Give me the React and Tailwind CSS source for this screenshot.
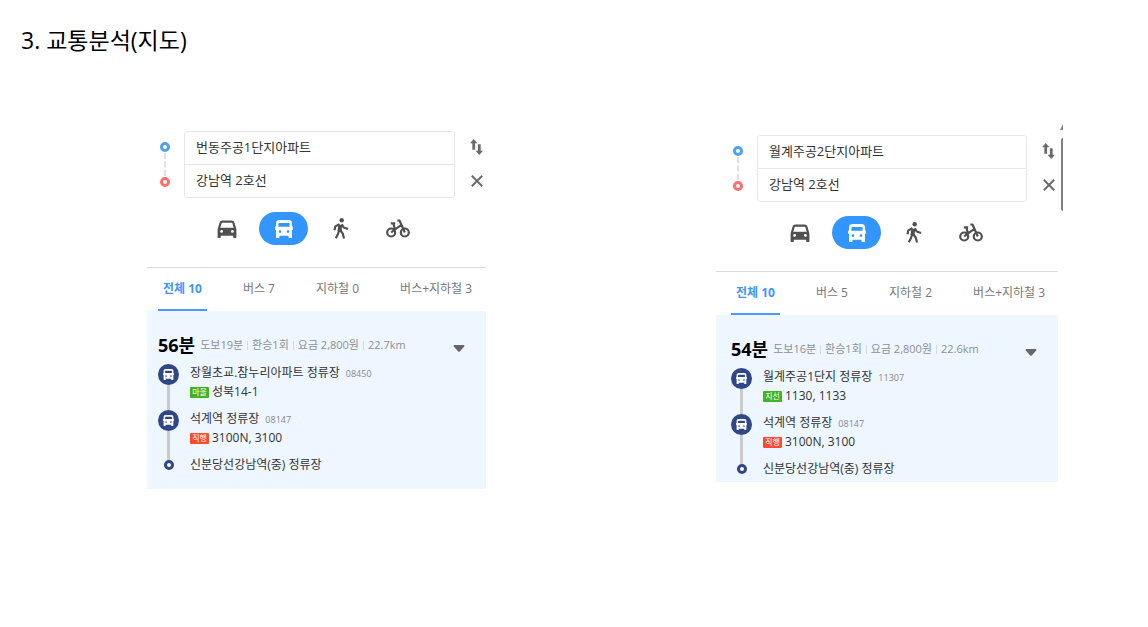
import React from 'react';

const CarIcon = () => (
  <svg viewBox="0 0 20 18" className="h-[18px] w-5" fill="#505050" aria-hidden="true">
    <path
      fillRule="evenodd"
      d="M5.500.5h9c1.700 0 2.500.7 3 2.200L19 8c.3.700.4 1.100.4 1.700V17c0 .6-.4 1-1 1h-1.200c-.6 0-1-.4-1-1v-1.300H3.800V17c0 .6-.4 1-1 1H1.600c-.6 0-1-.4-1-1V9.700C.6 9.100.7 8.700 1 8l1.500-5.300C3 1.200 3.800.5 5.500.5Zm.3 2.200c-.8 0-1.200.3-1.400 1L3.300 7.700h13.400l-1.100-4c-.2-.7-.6-1-1.400-1H5.800ZM4.600 10a1.400 1.400 0 1 0 0 2.800 1.400 1.400 0 0 0 0-2.800Zm10.800 0a1.400 1.400 0 1 0 0 2.800 1.400 1.400 0 0 0 0-2.800Z"
    />
  </svg>
);

const BusIcon = ({ className }) => (
  <svg viewBox="0 0 18 18" className={className} fill="#fff" aria-hidden="true">
    <path
      fillRule="evenodd"
      d="M4.500 0h9C16 0 17 1.200 17 3.500V6.500h.8v3.500H17v7c0 .6-.4 1-1 1h-1.500c-.6 0-1-.4-1-1v-1.200h-9V17c0 .6-.4 1-1 1H2c-.6 0-1-.4-1-1v-7H.2V6.500H1V3.500C1 1.200 2 0 4.500 0Zm-.3 2.900c-.5 0-.8.3-.8.800v3h11.200v-3c0-.5-.3-.8-.8-.8H4.200ZM5 10.300a1.300 1.300 0 1 0 0 2.600 1.300 1.300 0 0 0 0-2.600Zm8 0a1.300 1.300 0 1 0 0 2.600 1.300 1.300 0 0 0 0-2.600Z"
    />
  </svg>
);

const WalkIcon = () => (
  <svg viewBox="0 0 16 21" className="h-[21px] w-4" fill="none" stroke="#505050" aria-hidden="true">
    <circle cx="8.700" cy="2.300" r="2.200" fill="#505050" stroke="none" />
    <path d="M7.300 6.800 6.500 13.200" strokeWidth="4" />
    <path d="M6.500 6.200 2.300 8.400 1.500 12.300M8.800 6.300l1.900 3.200 4.400 1.500M6 12.500 5 16l-2.200 4.300M7.500 12.500l2.300 3.200 1.200 4.700" strokeWidth="2.200" strokeLinejoin="round" />
  </svg>
);

const BikeIcon = () => (
  <svg viewBox="0 0 24 19" className="h-[19px] w-6" fill="none" stroke="#505050" strokeWidth="2.200" aria-hidden="true">
    <circle cx="5.200" cy="13.500" r="4" />
    <circle cx="18.800" cy="13.500" r="4" />
    <path
      d="M4.800 4.300h4.400M7.400 4.300l1.400 5.900M5.200 13.500 9 10.300l5.800-4M11.300 1.500h2.200l5.300 12"
      strokeLinejoin="round"
    />
  </svg>
);

const SwapIcon = () => (
  <svg viewBox="0 0 14 18" className="h-[18px] w-3.5" fill="#6b6b6b" aria-hidden="true">
    <path d="M4 .5 8 5H5.500v7h-3V5H0ZM8.500 6h3v7H14l-4 4.500L6 13h2.500Z" />
  </svg>
);

const CloseIcon = () => (
  <svg viewBox="0 0 12 12" className="h-3 w-3" stroke="#6b6b6b" strokeWidth="2" aria-hidden="true">
    <path d="m.8.8 10.400 10.400M11.200.8.8 11.200" />
  </svg>
);

const modes = [
  { label: '자동차', icon: <CarIcon /> },
  { label: '대중교통', icon: <BusIcon className="h-[18px] w-[18px]" />, active: true },
  { label: '도보', icon: <WalkIcon /> },
  { label: '자전거', icon: <BikeIcon /> },
];

const routes = [
  {
    id: 'left',
    from: '번동주공1단지아파트',
    tabs: ['전체 10', '버스 7', '지하철 0', '버스+지하철 3'],
    time: '56분',
    facts: ['도보19분', '환승1회', '요금 2,800원', '22.7km'],
    stops: [
      { name: '장월초교.참누리아파트 정류장', code: '08450', kind: '마을', color: 'bg-[#43b31f]', lines: '성북14-1' },
      { name: '석계역 정류장', code: '08147', kind: '직행', color: 'bg-[#ff4a2e]', lines: '3100N, 3100' },
    ],
    inset: 'pl-[11px]',
    bottom: 'pb-[15px]',
  },
  {
    id: 'right',
    from: '월계주공2단지아파트',
    tabs: ['전체 10', '버스 5', '지하철 2', '버스+지하철 3'],
    time: '54분',
    facts: ['도보16분', '환승1회', '요금 2,800원', '22.6km'],
    stops: [
      { name: '월계주공1단지 정류장', code: '11307', kind: '지선', color: 'bg-[#43b31f]', lines: '1130, 1133' },
      { name: '석계역 정류장', code: '08147', kind: '직행', color: 'bg-[#ff4a2e]', lines: '3100N, 3100' },
    ],
    inset: 'pl-[15px]',
    bottom: 'pb-[4px]',
  },
];

function RoutePanel({ route }) {
  const field = 'block h-8 w-full bg-transparent px-[11px] pb-[3px] text-[13px] text-[#333] outline-none';
  return (
    <section className="min-w-0 flex-1">
      <form className={`flex ${route.inset} pr-[3px]`}>
        <div className="flex w-[14px] flex-col items-center py-[11px]" aria-hidden="true">
          <span className="h-[10px] w-[10px] rounded-full border-[3px] border-[#4f9ef8]" />
          <span className="my-px w-0 flex-1 border-l-2 border-dashed border-[#e0e0e0]" />
          <span className="h-[10px] w-[10px] rounded-full border-[3px] border-[#fb706b]" />
        </div>
        <div className="ml-3 min-w-0 flex-1 rounded-[3px] border border-[#e8e8e8]">
          <input className={field} aria-label="출발지" defaultValue={route.from} />
          <div className="border-t border-[#e8e8e8]">
            <input className={field} aria-label="도착지" defaultValue="강남역 2호선" />
          </div>
        </div>
        <div className="ml-[15px] flex w-[13px] flex-col">
          <button type="button" aria-label="출발지와 도착지 바꾸기" className="flex h-8 items-center justify-center">
            <SwapIcon />
          </button>
          <button type="button" aria-label="닫기" className="flex h-[35px] items-center justify-center">
            <CloseIcon />
          </button>
        </div>
      </form>

      <div className={route.inset}>
        <div className="mt-[14px] flex gap-2 pl-11">
          {modes.map((m) => (
            <button
              key={m.label}
              type="button"
              aria-label={m.label}
              className={`flex h-[33px] w-[49px] items-center justify-center rounded-full ${m.active ? 'bg-[#3396ff]' : ''}`}
            >
              {m.icon}
            </button>
          ))}
        </div>
      </div>

      <div role="tablist" className={`mt-[22px] flex h-11 gap-[31px] border-t border-[#dcdcdc] ${route.inset}`}>
        {route.tabs.map((t, i) => (
          <button
            key={t}
            type="button"
            role="tab"
            aria-selected={i === 0}
            className={`border-b-2 px-[5px] text-[12px] whitespace-nowrap ${
              i === 0 ? 'border-[#4b9bfa] font-bold text-[#3f94f8]' : 'border-transparent text-[#777]'
            }`}
          >
            {t}
          </button>
        ))}
      </div>

      <div className={`bg-[#eef6ff] pt-5 ${route.inset} ${route.bottom}`}>
        <div className="mb-[5px] flex h-7 items-center pr-[21px]">
          <h2 className="text-[18px] font-bold text-black">{route.time}</h2>
          <ul className="ml-[5px] flex items-center text-[11px] whitespace-nowrap text-[#8d9194]">
            {route.facts.map((f, i) => (
              <li key={f} className="flex items-center">
                {i > 0 && <span className="mx-1 h-[9px] w-px bg-[#d5dbe1]" />}
                {f}
              </li>
            ))}
          </ul>
          <button type="button" aria-label="상세 경로 펼치기" className="mt-1.5 ml-auto">
            <svg viewBox="0 0 12 7" className="h-[7px] w-3" fill="#666" aria-hidden="true">
              <path d="M1.500 0h9c1 0 1.300.9.700 1.600L7 6.300c-.6.700-1.400.7-2 0L.8 1.600C.2.900.5 0 1.500 0Z" />
            </svg>
          </button>
        </div>
        <ol className="text-[12px] leading-[18px] whitespace-nowrap text-[#333]">
          {route.stops.map((s) => (
            <li key={s.name} className="flex h-[46px] gap-[11px]">
              <div className="flex w-[21px] flex-col items-center">
                <span className="flex h-[21px] w-[21px] shrink-0 items-center justify-center rounded-full bg-[#2f4687]">
                  <BusIcon className="h-[11px] w-[11px]" />
                </span>
                <span className="w-[3px] flex-1 bg-[#c8cacc]" />
              </div>
              <div>
                <p>
                  {s.name}
                  <span className="ml-1.5 text-[9px] text-[#85898c]">{s.code}</span>
                </p>
                <p className="flex items-center gap-[3px]">
                  <span className={`flex h-[11px] w-[19px] items-center justify-center rounded-[1px] text-[8px] text-white ${s.color}`}>
                    {s.kind}
                  </span>
                  {s.lines}
                </p>
              </div>
            </li>
          ))}
          <li className="flex h-[18px] gap-[11px]">
            <div className="flex w-[21px] flex-col items-center">
              <span className="h-1 w-[3px] bg-[#c8cacc]" />
              <span className="h-[10px] w-[10px] rounded-full border-[3px] border-[#2f4687] bg-white" />
            </div>
            <p>신분당선강남역(중) 정류장</p>
          </li>
        </ol>
      </div>
    </section>
  );
}

export default function App() {
  return (
    <main className="min-h-screen bg-white pt-6 font-['Open_Sans','Noto_Sans_CJK_KR',sans-serif]">
      <h1 className="pl-[21px] text-[23px] leading-8 text-black">3. 교통분석(지도)</h1>
      <div className="mt-[68px] grid grid-cols-[147fr_339fr_230fr_347fr_85fr] items-start">
        <div className="col-start-2 flex pt-[7px]">
          <RoutePanel route={routes[0]} />
        </div>
        <div className="col-start-4 flex">
          <div className="flex min-w-0 flex-1 pt-[11px]">
            <RoutePanel route={routes[1]} />
          </div>
          <div className="flex w-[5px] flex-col items-end" aria-hidden="true">
            <svg viewBox="0 0 3 6" className="h-1.5 w-[3px]" fill="#858585">
              <path d="M3 0v6H0Z" />
            </svg>
            <span className="mt-2 h-[73px] w-[2px] rounded-l-full bg-[#808080]" />
          </div>
        </div>
      </div>
    </main>
  );
}
